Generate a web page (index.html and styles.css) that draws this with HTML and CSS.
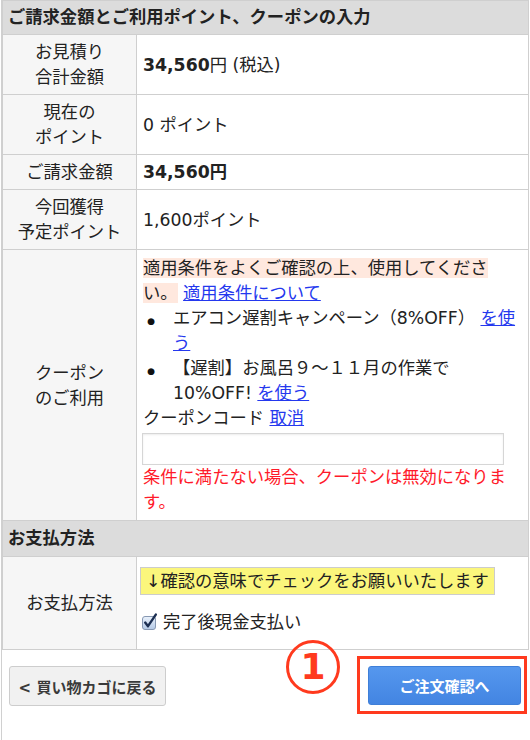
FILE: index.html
```html
<!DOCTYPE html>
<html lang="ja">
<head>
<meta charset="utf-8">
<title>ご請求金額とご利用ポイント、クーポンの入力</title>
<link rel="stylesheet" href="styles.css">
</head>
<body>
<div class="page">
<table class="form">
  <tr><th colspan="2" class="sec">ご請求金額とご利用ポイント、クーポンの入力</th></tr>
  <tr><th class="lbl">お見積り<br>合計金額</th><td class="val"><b>34,560</b>円 (税込)</td></tr>
  <tr><th class="lbl">現在の<br>ポイント</th><td class="val">0 ポイント</td></tr>
  <tr><th class="lbl">ご請求金額</th><td class="val"><b>34,560円</b></td></tr>
  <tr><th class="lbl">今回獲得<br>予定ポイント</th><td class="val">1,600ポイント</td></tr>
  <tr>
    <th class="lbl">クーポン<br>のご利用</th>
    <td class="val coupon">
      <span class="note">適用条件をよくご確認の上、使用してください。</span> <a href="#">適用条件について</a>
      <ul class="clist">
        <li>エアコン遅割キャンペーン（8%OFF） <a href="#">を使う</a></li>
        <li>【遅割】お風呂９～１１月の作業で10%OFF! <a href="#">を使う</a></li>
      </ul>
      <div>クーポンコード <a href="#">取消</a></div>
      <input class="code" type="text">
      <div class="warn">条件に満たない場合、クーポンは無効になります。</div>
    </td>
  </tr>
  <tr><th colspan="2" class="sec sec2">お支払方法</th></tr>
  <tr>
    <th class="lbl">お支払方法</th>
    <td class="val pay">
      <div class="hint">↓確認の意味でチェックをお願いいたします</div>
      <label class="check">
        <svg class="cb" width="17" height="17" viewBox="0 0 17 17">
          <defs>
            <linearGradient id="cbg" x1="0" y1="0" x2="0" y2="1">
              <stop offset="0" stop-color="#eaf2fc"/>
              <stop offset="1" stop-color="#b4c9e6"/>
            </linearGradient>
          </defs>
          <rect x="0.5" y="3.5" width="13" height="13" rx="2.5" fill="url(#cbg)" stroke="#8798b2"/>
          <path d="M3.2 9.6 L6 13.2 L13.8 1.6" fill="none" stroke="#1c2f52" stroke-width="2.4" stroke-linecap="round" stroke-linejoin="round"/>
        </svg>
        <span>完了後現金支払い</span>
      </label>
    </td>
  </tr>
</table>

<div class="footer">
  <button class="back" type="button">&lt; 買い物カゴに戻る</button>
  <div class="mark">1</div>
  <div class="frame">
    <button class="next" type="button">ご注文確認へ</button>
  </div>
</div>
</div>
</body>
</html>
```

FILE: styles.css
```css
html, body {
  margin: 0;
  padding: 0;
  background: #fff;
}
body {
  font-family: "DejaVu Sans", "Noto Sans CJK JP", sans-serif;
  font-size: 17.3px;
  color: #222;
  width: 530px;
}
.page {
  border-left: 1px solid #d0d0d0;
  margin-left: 1px;
  min-height: 740px;
}
.form {
  border-collapse: collapse;
  width: 527px;
  margin-left: 0;
}
.form th, .form td {
  border: 1px solid #cfcfcf;
  line-height: 25px;
  padding: 5px 6px 4px;
  vertical-align: middle;
}
.form .sec {
  background: #dcdcdc;
  text-align: left;
  font-weight: bold;
  padding: 4px 5px 4px;
}
.form .sec2 {
  padding: 5px 5px 5px;
}
.form .lbl {
  width: 121px;
  background: #f6f6f6;
  font-weight: normal;
  text-align: center;
}
.form .val {
  text-align: left;
  background: #fff;
}
.form .coupon {
  padding: 6px 6px 5px;
}
a {
  color: #2438ee;
  text-decoration: underline;
}
.note {
  background: #ffe8de;
}
.clist {
  margin: 0;
  padding-left: 30px;
  list-style: disc;
}
.clist li::marker {
  content: "●\2003\2003";
  font-size: 9px;
  color: #111;
}
.code {
  display: block;
  box-sizing: border-box;
  width: 362px;
  height: 32px;
  margin: 2px 0 0 -1px;
  border: 1px solid #d6d6d6;
  box-shadow: inset 0 1px 2px rgba(0,0,0,0.08);
  padding: 0 4px;
  font: inherit;
}
.warn {
  color: #ff1a2a;
}
.form .pay {
  padding-top: 10px;
  padding-bottom: 14px;
}
.hint {
  display: inline-block;
  background: #fbf67c;
  border: 1px solid #cccccc;
  line-height: 26px;
  padding: 0 5px;
  margin-left: -3px;
}
.check {
  display: flex;
  align-items: center;
  gap: 4px;
  margin-top: 15px;
  margin-left: -1px;
}
.cb {
  display: block;
  flex: none;
  margin-top: -3px;
}
.footer {
  position: relative;
  display: flex;
  align-items: flex-start;
  padding: 6px 3px 0 7px;
}
.back {
  margin-top: 10px;
  width: 157px;
  height: 40px;
  background: #f1f1f1;
  border: 1px solid #cdcdcd;
  border-radius: 3px;
  color: #3a3a3a;
  font-family: "DejaVu Sans", "Noto Sans CJK JP", sans-serif;
  font-weight: bold;
  font-size: 15px;
  padding: 0;
}
.frame {
  margin-left: auto;
  border: 3px solid #ff3a1e;
  padding: 7px 3px 6px 8px;
}
.next {
  display: block;
  width: 153px;
  height: 39px;
  background: linear-gradient(#5597ee, #4385e2);
  border: 1px solid #3f7fd8;
  border-radius: 3px;
  color: #fff;
  font-family: "DejaVu Sans", "Noto Sans CJK JP", sans-serif;
  font-weight: bold;
  font-size: 15px;
  padding: 0;
}
.mark {
  position: absolute;
  left: 284px;
  top: -10px;
  width: 48px;
  height: 48px;
  border: 3.5px solid #ff3a1e;
  border-radius: 50%;
  color: #ff3a1e;
  font-family: "DejaVu Sans", sans-serif;
  font-size: 36px;
  line-height: 48px;
  text-align: center;
  font-weight: bold;
}
```
